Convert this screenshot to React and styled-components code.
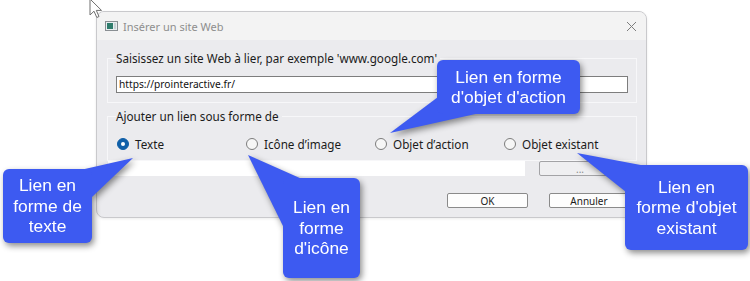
import React from 'react';
import styled, { createGlobalStyle } from 'styled-components';

const GlobalStyle = createGlobalStyle`
  html, body {
    margin: 0;
    padding: 0;
    background: #fff;
  }
  * { box-sizing: border-box; }
`;

const Stage = styled.div`
  position: relative;
  width: 750px;
  height: 281px;
  overflow: hidden;
  background: #fff;
  padding: 11px 0 0 96px;
  font-family: "Noto Sans", "Open Sans", sans-serif;
  color: #1b1b1b;
`;

const Dialog = styled.div`
  width: 551px;
  height: 207px;
  border: 1px solid #c9c9cc;
  border-radius: 8px;
  background: #ebebee;
  overflow: hidden;
  box-shadow: 0 1px 3px rgba(0, 0, 0, 0.08);
`;

const TitleBar = styled.div`
  height: 28px;
  display: flex;
  align-items: center;
  padding: 0 9px 0 8px;
  background: #f3f3f3;
`;

const Title = styled.span`
  margin-left: 5px;
  font-size: 11px;
  color: #8e8e8e;
  flex: 1;
`;

const Body = styled.div`
  padding-top: 9px;
`;

const Group = styled.fieldset`
  margin: ${p => p.$top || 0}px 9px 0 10px;
  padding: 0 8px ${p => p.$bottom}px 8px;
  border: 1px solid #f7f7f9;
  min-inline-size: 0;
`;

const Legend = styled.legend`
  padding: 0 3px 0 0;
  font-size: 11.7px;
  line-height: 18px;
`;

const UrlInput = styled.div`
  margin-top: 9px;
  height: 17px;
  border: 1px solid #7d7d7d;
  background: #fff;
  font-size: 10.2px;
  line-height: 15px;
  padding-left: 2px;
  color: #111;
`;

const RadioRow = styled.div`
  margin: 10px 0 0 1px;
  display: grid;
  grid-template-columns: repeat(4, 129px);
  height: 18px;
`;

const RadioItem = styled.label`
  display: flex;
  align-items: center;
  gap: 6px;
  font-size: 11.7px;
  white-space: nowrap;
`;

const RadioDot = styled.span`
  width: 12px;
  height: 12px;
  border-radius: 50%;
  flex: none;
  display: flex;
  align-items: center;
  justify-content: center;
  background: ${p => (p.$on ? '#0f5fa8' : '#f6f6f6')};
  border: 1px solid ${p => (p.$on ? '#0f5fa8' : '#7c7c7c')};

  &::after {
    content: '';
    width: 4px;
    height: 4px;
    border-radius: 50%;
    background: #fff;
    display: ${p => (p.$on ? 'block' : 'none')};
  }
`;

const TargetRow = styled.div`
  display: flex;
  gap: 14px;
  margin-left: 11px;
  height: 15px;
`;

const TargetField = styled.div`
  width: 417px;
  background: #fff;
`;

const Button = styled.div`
  width: ${p => p.$w}px;
  height: 15px;
  display: flex;
  align-items: center;
  justify-content: center;
  font-size: 10px;
  border-radius: 2px;
  border: 1px solid ${p => (p.$muted ? '#a3a3a6' : '#8a8a8a')};
  background: ${p => (p.$muted ? '#efeff1' : '#fdfdfd')};
  color: ${p => (p.$muted ? '#8a8a8a' : '#1b1b1b')};
`;

const Footer = styled.div`
  display: flex;
  justify-content: flex-end;
  gap: 21px;
  padding: 17px 17px 0 0;
`;

const Overlay = styled.div`
  position: absolute;
  inset: 0;
  pointer-events: none;
  filter: drop-shadow(2px 3px 3px rgba(0, 0, 0, 0.45));
`;

const Tail = styled.svg`
  position: absolute;
  inset: 0;
`;

const Bubble = styled.div`
  position: absolute;
  left: ${p => p.$x}px;
  top: ${p => p.$y}px;
  width: ${p => p.$w}px;
  height: ${p => p.$h}px;
  border-radius: 6px;
  background: #3d5af1;
  color: #fff;
  font-family: "Liberation Sans", Arial, sans-serif;
  font-size: 17.4px;
  line-height: 20.5px;
  text-align: center;
  display: flex;
  align-items: center;
  justify-content: center;
`;

const Cursor = styled.svg`
  position: absolute;
  left: 89px;
  top: -2px;
`;

const callouts = [
  { x: 3, y: 169, w: 89, h: 74, tail: '76,171 133,158 92,197', lines: ['Lien en', 'forme de', 'texte'] },
  { x: 283, y: 178, w: 77, h: 100, tail: '248,155 302,179 283,226', lines: ['Lien en', 'forme', "d'icône"] },
  { x: 437, y: 60, w: 143, h: 54, tail: '390,133 438,97 480,113', lines: ['Lien en forme', "d'objet d'action"] },
  { x: 625, y: 165, w: 123, h: 85, tail: '577,153 646,166 626,192', lines: ['Lien en', "forme d'objet", 'existant'] },
];

const options = ['Texte', 'Icône d’image', 'Objet d’action', 'Objet existant'];

function AppIcon() {
  return (
    <svg width="13" height="10" viewBox="0 0 13 10">
      <rect x="0.5" y="0.5" width="12" height="9" fill="#e9eef0" stroke="#8a8f93" />
      <rect x="2" y="2" width="6" height="6" fill="#2f7c6c" />
      <rect x="9" y="2" width="2" height="6" fill="#c9d3d6" />
    </svg>
  );
}

function CloseIcon() {
  return (
    <svg width="11" height="11" viewBox="0 0 11 11">
      <path d="M1 1 L10 10 M10 1 L1 10" stroke="#7d7d7d" strokeWidth="1" />
    </svg>
  );
}

export default function App() {
  return (
    <>
      <GlobalStyle />
      <Stage>
        <Dialog>
          <TitleBar>
            <AppIcon />
            <Title>Insérer un site Web</Title>
            <CloseIcon />
          </TitleBar>
          <Body>
            <Group $bottom={9}>
              <Legend>Saisissez un site Web à lier, par exemple 'www.google.com'</Legend>
              <UrlInput>https://prointeractive.fr/</UrlInput>
            </Group>
            <Group $top={4} $bottom={7}>
              <Legend>Ajouter un lien sous forme de</Legend>
              <RadioRow>
                {options.map((o, i) => (
                  <RadioItem key={o}>
                    <RadioDot $on={i === 0} />
                    {o}
                  </RadioItem>
                ))}
              </RadioRow>
            </Group>
            <TargetRow>
              <TargetField />
              <Button $w={82} $muted>...</Button>
            </TargetRow>
            <Footer>
              <Button $w={81}>OK</Button>
              <Button $w={80}>Annuler</Button>
            </Footer>
          </Body>
        </Dialog>

        {callouts.map((c, i) => (
          <Overlay key={i}>
            <Tail width="750" height="281">
              <polygon points={c.tail} fill="#3d5af1" />
            </Tail>
            <Bubble $x={c.x} $y={c.y} $w={c.w} $h={c.h}>
              <div>
                {c.lines.map((l, j) => (
                  <div key={j}>{l}</div>
                ))}
              </div>
            </Bubble>
          </Overlay>
        ))}

        <Cursor width="14" height="21" viewBox="0 0 14 21">
          <path d="M1 1 L1 17 L5 13.2 L7.8 19.5 L10 18.5 L7.3 12.4 L12.5 12.4 Z" fill="#fff" stroke="#6f6f6f" strokeWidth="1" strokeLinejoin="round" />
        </Cursor>
      </Stage>
    </>
  );
}
